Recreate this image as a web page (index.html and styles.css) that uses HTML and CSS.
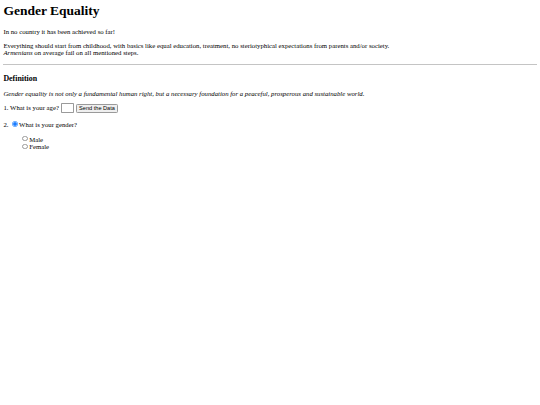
FILE: index.html
```html
<!DOCTYPE html>
<html>
<head>
<meta charset="utf-8">
<title>Gender Equality</title>
<link rel="stylesheet" href="styles.css">
</head>
<body>
<h1 class="title">Gender Equality</h1>
<p>In no country it has been achieved so far!</p>
<p>Everything should start from childhood, with basics like equal education, treatment, no steriotyphical expectations from parents and/or society.<br><em>Armenians</em> on average fail on all mentioned steps.</p>
<hr class="rule">
<h3 class="subtitle">Definition</h3>
<p><em>Gender equality is not only a fundamental human right, but a necessary foundation for a peaceful, prosperous and sustainable world.</em></p>
<form class="survey">
<p>1. What is your age? <input type="text" class="age"> <button type="button" class="send">Send the Data</button></p>
<p>2. <input type="radio" class="radio" name="q" checked>What is your gender?</p>
<ul class="options">
<li><input type="radio" class="radio" name="g">Male</li>
<li><input type="radio" class="radio" name="g">Female</li>
</ul>
</form>
</body>
</html>
```
FILE: styles.css
```css
body {
  margin: 3.4px;
  font-family: "Liberation Serif", "Times New Roman", serif;
  font-size: 6.75px;
  color: #000;
}
.title {
  margin-top: 0;
}
.rule {
  border: 0;
  border-top: 1px solid #c4c4c4;
  margin: 7.75px 0 0;
}
.subtitle {
  margin-top: 8.9px;
  margin-bottom: 6.9px;
}
.age {
  width: 9.7px;
  height: 7px;
  padding: 0.4px 0.8px;
  border: 0.6px solid #9a9a9a;
  border-radius: 0.8px;
  font-size: 5.6px;
  vertical-align: baseline;
}
.send {
  font-family: "Liberation Sans", Arial, sans-serif;
  font-size: 5.6px;
  padding: 0.4px 2.5px;
  border: 0.6px solid #9a9a9a;
  border-radius: 1.3px;
  background: #efefef;
  color: #000;
}
.radio {
  appearance: none;
  -webkit-appearance: none;
  box-sizing: border-box;
  width: 5.5px;
  height: 5.5px;
  margin: 1.3px 1.3px 0 2.1px;
  border: 0.6px solid #9a9a9a;
  border-radius: 50%;
  background: #fff;
  vertical-align: baseline;
}
.radio:checked {
  border-color: #4d9bff;
  background: radial-gradient(circle, #1a7cff 0, #1a7cff 1.5px, #fff 1.9px);
}
.options {
  list-style: none;
  padding-left: 16.9px;
  margin-top: 6.5px;
}
```
